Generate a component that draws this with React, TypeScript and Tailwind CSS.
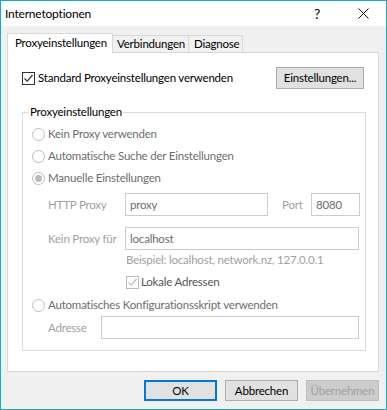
import type { ReactNode } from "react";

const font = { fontFamily: 'Lato, "Segoe UI", sans-serif' };

function Check({ disabled }: { disabled?: boolean }) {
  return (
    <span
      className={`flex h-[13px] w-[13px] shrink-0 items-center justify-center border bg-white ${
        disabled ? "border-[#bcbcbc]" : "border-[#333333]"
      }`}
    >
      <svg width="11" height="11" viewBox="0 0 11 11">
        <path
          d="M1.5 5.5 L4.2 8.2 L9.5 2"
          fill="none"
          stroke={disabled ? "#bcbcbc" : "#333333"}
          strokeWidth="1.2"
        />
      </svg>
    </span>
  );
}

function Radio({ checked }: { checked?: boolean }) {
  return (
    <span className="flex h-[13px] w-[13px] shrink-0 items-center justify-center rounded-full border border-[#bcbcbc] bg-white">
      {checked && <span className="h-[7px] w-[7px] rounded-full bg-[#bcbcbc]" />}
    </span>
  );
}

function RadioRow({ label, checked, h = "h-[22px]" }: { label: string; checked?: boolean; h?: string }) {
  return (
    <div className={`flex ${h} items-center gap-[3px] text-[#6d6d6d]`}>
      <Radio checked={checked} />
      <span>{label}</span>
    </div>
  );
}

function Field({ value, className }: { value?: string; className: string }) {
  return (
    <div
      className={`flex h-[23px] shrink-0 items-center border border-[#cccccc] bg-white px-[4px] text-[#6d6d6d] ${className}`}
    >
      {value}
    </div>
  );
}

function Button({ children, variant }: { children: ReactNode; variant?: "default" | "disabled" }) {
  const cls =
    variant === "default"
      ? "border-2 border-[#0078d7] bg-[#e1e1e1] text-black"
      : variant === "disabled"
        ? "border border-[#bfbfbf] bg-[#cccccc] text-[#a0a0a0]"
        : "border border-[#adadad] bg-[#e1e1e1] text-black";
  return (
    <div className={`flex h-[21px] w-[73px] shrink-0 items-center justify-center ${cls}`}>{children}</div>
  );
}

export default function App() {
  return (
    <div
      style={font}
      className="flex h-[410px] w-[387px] flex-col border border-[#1ba9c4] bg-[#f0f0f0] text-[11.5px] leading-[16px] tracking-[-0.2px] whitespace-nowrap text-black"
    >
      <div className="flex h-[25px] shrink-0 items-center bg-white">
        <span className="pl-[4px] text-[12px]">Internetoptionen</span>
        <div className="ml-auto flex h-full">
          <div className="flex w-[46px] items-center justify-center text-[14px]">?</div>
          <div className="flex w-[46px] items-center justify-center">
            <svg width="11" height="11" viewBox="0 0 11 11">
              <path d="M0.5 0.5 L10.5 10.5 M10.5 0.5 L0.5 10.5" stroke="#111" strokeWidth="1" />
            </svg>
          </div>
        </div>
      </div>

      <div className="flex shrink-0 flex-col px-[6px] pt-[7px]">
        <div className="relative z-10 flex h-[19px] items-end">
          <div className="-mb-px flex h-[20px] w-[106px] items-start border border-b-0 border-[#d9d9d9] bg-white pl-[7px] pt-[1px]">
            Proxyeinstellungen
          </div>
          <div className="flex h-[17px] w-[76px] items-center border border-l-0 border-b-0 border-[#d9d9d9] pl-[4px]">
            Verbindungen
          </div>
          <div className="flex h-[17px] w-[54px] items-center border border-l-0 border-b-0 border-[#d9d9d9] pl-[5px]">
            Diagnose
          </div>
        </div>

        <div className="flex h-[320px] w-[372px] flex-col border border-[#d9d9d9] bg-white px-[14px] pt-[14px]">
          <div className="flex h-[22px] items-center">
            <div className="flex items-center gap-[3px]">
              <Check />
              <span>Standard Proxyeinstellungen verwenden</span>
            </div>
            <div className="ml-auto flex h-[22px] w-[88px] items-center justify-center border border-[#adadad] bg-[#e1e1e1]">
              Einstellungen...
            </div>
          </div>

          <fieldset className="mt-[15px] w-[344px] border border-[#dcdcdc] pr-[5px] pb-[11px] pl-[9px]">
            <legend className="-ml-[3px] px-[1px]">Proxyeinstellungen</legend>
            <div className="mt-[3px]">
              <RadioRow label="Kein Proxy verwenden" />
              <RadioRow label="Automatische Suche der Einstellungen" />
              <RadioRow label="Manuelle Einstellungen" checked />
            </div>
            <div className="mt-[4px] flex items-center pl-[16px]">
              <span className="w-[77px] shrink-0 text-[#a0a0a0]">HTTP Proxy</span>
              <Field value="proxy" className="w-[143px]" />
              <span className="ml-auto w-[29px] shrink-0 text-[#a0a0a0]">Port</span>
              <Field value="8080" className="w-[49px]" />
            </div>
            <div className="mt-[11px] flex items-center pl-[16px]">
              <span className="w-[77px] shrink-0 text-[#a0a0a0]">Kein Proxy für</span>
              <Field value="localhost" className="w-[234px]" />
            </div>
            <div className="mt-[2px] pl-[94px] text-[#a0a0a0]">Beispiel: localhost, network.nz, 127.0.0.1</div>
            <div className="mt-[6px] flex h-[16px] items-center gap-[2px] pl-[94px] text-[#555555]">
              <Check disabled />
              <span>Lokale Adressen</span>
            </div>
            <div className="mt-[6px]">
              <RadioRow label="Automatisches Konfigurationsskript verwenden" h="h-[18px]" />
            </div>
            <div className="mt-[2px] flex items-center pl-[16px]">
              <span className="w-[53px] shrink-0 text-[#a0a0a0]">Adresse</span>
              <Field className="w-[258px]" />
            </div>
          </fieldset>
        </div>
      </div>

      <div className="mt-[8px] flex justify-end gap-[8px] pr-[7px]">
        <Button variant="default">OK</Button>
        <Button>Abbrechen</Button>
        <Button variant="disabled">Übernehmen</Button>
      </div>
    </div>
  );
}
